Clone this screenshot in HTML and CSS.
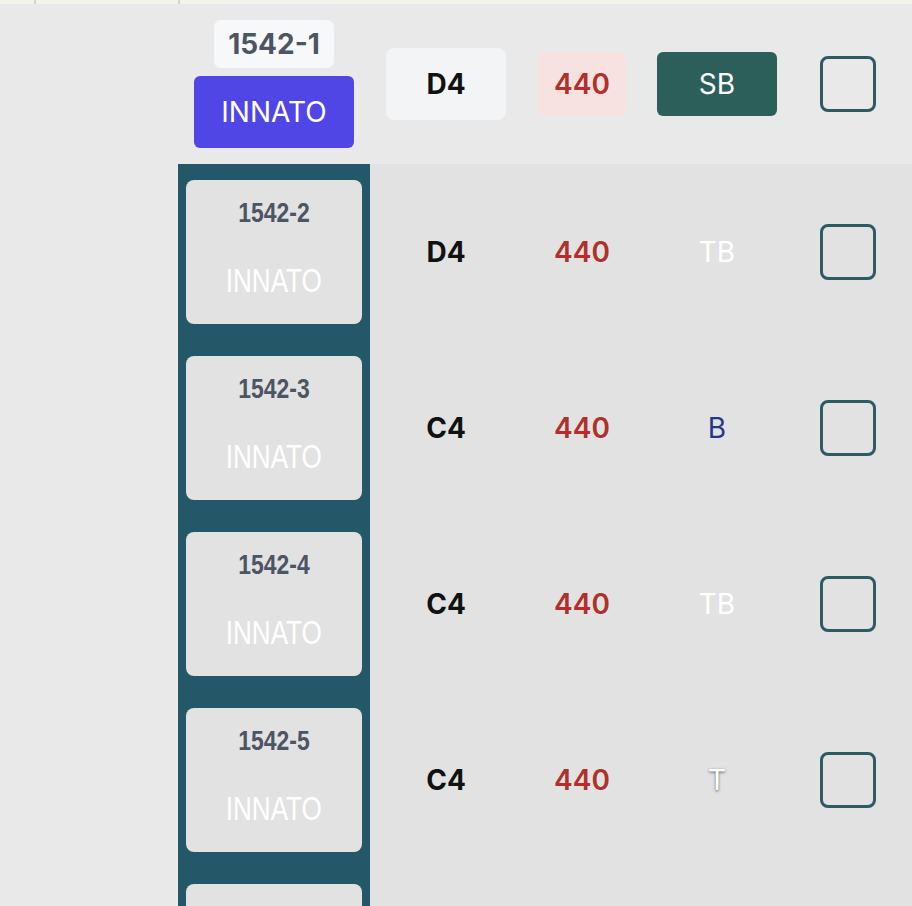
FILE: index.html
```html
<!DOCTYPE html>
<html>
<head>
<meta charset="utf-8">
<link rel="stylesheet" href="styles.css">
</head>
<body>
<div class="topbar">
  <div class="tb-cell tb-a"></div>
  <div class="tb-cell tb-b"></div>
  <div class="tb-cell tb-c"></div>
</div>
<div class="table">
  <div class="row head">
    <div class="cell spacer"></div>
    <div class="cell name-head">
      <div class="id-badge">1542-1</div>
      <div class="maker-btn">INNATO</div>
    </div>
    <div class="cell"><div class="note-box">D4</div></div>
    <div class="cell"><div class="freq-box">440</div></div>
    <div class="cell"><div class="type-box">SB</div></div>
    <div class="cell check-cell"><div class="check"></div></div>
  </div>

  <div class="row item">
    <div class="cell spacer"></div>
    <div class="cell name"><div class="card"><div class="card-id"><span>1542-2</span></div><div class="card-maker"><span>INNATO</span></div></div></div>
    <div class="cell"><span class="note">D4</span></div>
    <div class="cell"><span class="freq">440</span></div>
    <div class="cell"><span class="type white">TB</span></div>
    <div class="cell check-cell"><div class="check"></div></div>
  </div>

  <div class="row item">
    <div class="cell spacer"></div>
    <div class="cell name"><div class="card"><div class="card-id"><span>1542-3</span></div><div class="card-maker"><span>INNATO</span></div></div></div>
    <div class="cell"><span class="note">C4</span></div>
    <div class="cell"><span class="freq">440</span></div>
    <div class="cell"><span class="type blue">B</span></div>
    <div class="cell check-cell"><div class="check"></div></div>
  </div>

  <div class="row item">
    <div class="cell spacer"></div>
    <div class="cell name"><div class="card"><div class="card-id"><span>1542-4</span></div><div class="card-maker"><span>INNATO</span></div></div></div>
    <div class="cell"><span class="note">C4</span></div>
    <div class="cell"><span class="freq">440</span></div>
    <div class="cell"><span class="type white">TB</span></div>
    <div class="cell check-cell"><div class="check"></div></div>
  </div>

  <div class="row item">
    <div class="cell spacer"></div>
    <div class="cell name"><div class="card"><div class="card-id"><span>1542-5</span></div><div class="card-maker"><span>INNATO</span></div></div></div>
    <div class="cell"><span class="note">C4</span></div>
    <div class="cell"><span class="freq">440</span></div>
    <div class="cell"><span class="type white shadow">T</span></div>
    <div class="cell check-cell"><div class="check"></div></div>
  </div>

  <div class="row item">
    <div class="cell spacer"></div>
    <div class="cell name"><div class="card"></div></div>
    <div class="cell"></div>
    <div class="cell"></div>
    <div class="cell"></div>
    <div class="cell check-cell"><div class="check"></div></div>
  </div>
</div>
</body>
</html>
```

FILE: styles.css
```css
html, body {
  margin: 0;
  padding: 0;
  background: #e9e9e9;
  overflow: hidden;
  font-family: Inter, "Liberation Sans", sans-serif;
}

.topbar {
  display: flex;
  height: 4px;
  background: #f3f3ec;
}
.tb-cell {
  height: 4px;
}
.tb-a { width: 34px; border-right: 2px solid #d3d3d3; }
.tb-b { width: 142px; border-right: 2px solid #d3d3d3; }
.tb-c { flex: 1; }

.row {
  display: grid;
  grid-template-columns: 178px 192px 152px 120px 150px 1fr;
}
.cell {
  display: flex;
  align-items: center;
  justify-content: center;
}
.cell.check-cell {
  justify-content: flex-start;
  padding-left: 28px;
}

.head {
  height: 160px;
  background: #e9e9e9;
}
.name-head {
  flex-direction: column;
  gap: 8px;
}
.id-badge {
  width: 120px;
  height: 48px;
  background: #f7f8fa;
  border-radius: 7px;
  display: flex;
  align-items: center;
  justify-content: center;
  font-size: 28px;
  font-weight: 700;
  color: #4b5563;
}
.maker-btn {
  width: 160px;
  height: 72px;
  background: #4f46e5;
  border-radius: 6px;
  display: flex;
  align-items: center;
  justify-content: center;
  font-size: 28px;
  color: #ffffff;
}
.note-box {
  width: 120px;
  height: 72px;
  background: #f3f4f6;
  border-radius: 8px;
  display: flex;
  align-items: center;
  justify-content: center;
  font-size: 28px;
  font-weight: 700;
  color: #111111;
}
.freq-box {
  width: 88px;
  height: 64px;
  background: #f8e2e1;
  border-radius: 6px;
  display: flex;
  align-items: center;
  justify-content: center;
  font-size: 28px;
  font-weight: 600;
  color: #b0302a;
}
.type-box {
  width: 120px;
  height: 64px;
  background: #2c5f5a;
  border-radius: 6px;
  display: flex;
  align-items: center;
  justify-content: center;
  font-size: 28px;
  color: #ffffff;
}
.check {
  width: 50px;
  height: 50px;
  border: 3px solid #2f5a62;
  border-radius: 8px;
}

.item {
  height: 176px;
}
.item .cell {
  background: #e2e2e2;
}
.item .cell.spacer {
  background: transparent;
}
.item .cell.name {
  background: #245868;
  padding: 16px 8px;
  align-items: stretch;
  box-sizing: border-box;
}
.card {
  flex: 1;
  background: #e2e2e2;
  border-radius: 8px;
  display: flex;
  flex-direction: column;
  align-items: center;
  padding-top: 18px;
  box-sizing: border-box;
  font-family: "Liberation Sans", Arial, sans-serif;
}
.card-id {
  font-size: 27px;
  line-height: 30px;
  font-weight: 700;
  color: #4b5563;
}
.card-id span {
  display: inline-block;
  transform: scaleX(0.85);
}
.card-maker {
  margin-top: 33px;
  font-size: 33px;
  line-height: 40px;
  color: #ffffff;
}
.card-maker span {
  display: inline-block;
  transform: scaleX(0.79);
}
.note {
  font-size: 28px;
  font-weight: 700;
  color: #111111;
}
.freq {
  font-size: 28px;
  font-weight: 600;
  color: #b0302a;
}
.type {
  font-size: 28px;
}
.type.white { color: #ffffff; }
.type.blue { color: #24378a; }
.type.shadow { text-shadow: 0 1px 3px rgba(0, 0, 0, 0.6); }
```
